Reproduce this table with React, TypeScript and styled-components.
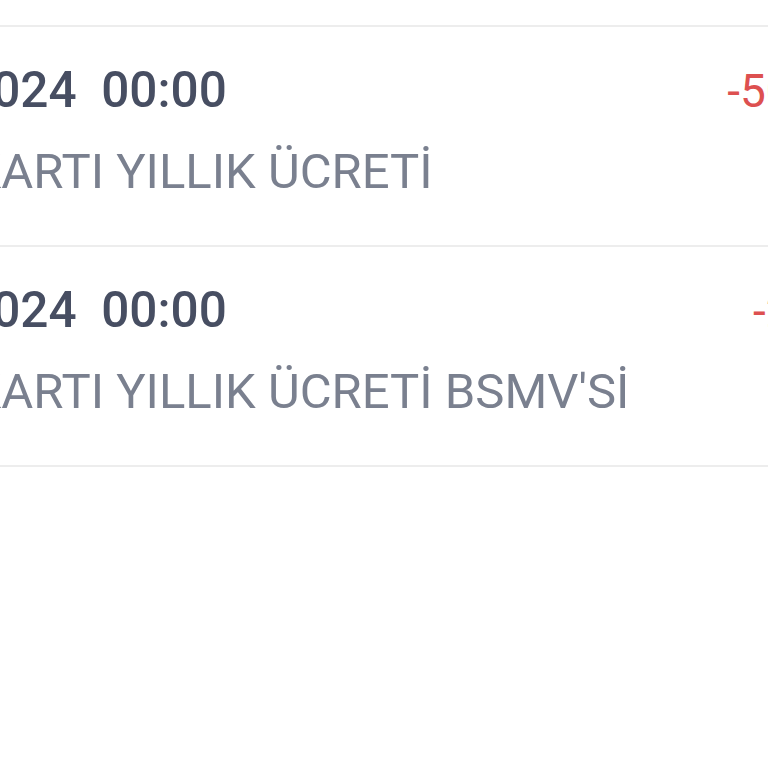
import styled, { createGlobalStyle } from "styled-components";

const GlobalStyle = createGlobalStyle`
    html, body {
        margin: 0;
        padding: 0;
        background: #ffffff;
        overflow: hidden;
    }
    body {
        font-family: Roboto, "Noto Sans", "Liberation Sans", sans-serif;
    }
`;

interface Transaction {
    date: string;
    time: string;
    description: string;
    amount: string;
}

const transactions: Transaction[] = [
    { date: "15.03.2024", time: "00:00", description: "KREDİ KARTI YILLIK ÜCRETİ", amount: "-500,00 TL" },
    { date: "15.03.2024", time: "00:00", description: "KREDİ KARTI YILLIK ÜCRETİ BSMV'Sİ", amount: "-25,00 TL" },
];

const Screen = styled.div`
    width: 768px;
    height: 768px;
    overflow: hidden;
    background: #ffffff;
`;

const List = styled.div`
    width: 1120px;
    margin-left: -176px;
    padding-top: 25px;
`;

const Row = styled.div`
    box-sizing: border-box;
    height: 220px;
    padding-top: 33px;
    border-top: 2px solid #ededed;
    display: flex;
    flex-direction: column;
    gap: 21px;

    &:last-child {
        height: 222px;
        border-bottom: 2px solid #ededed;
    }
`;

const TopLine = styled.div`
    display: flex;
    justify-content: space-between;
    align-items: baseline;
    padding-right: 3px;
`;

const DateText = styled.div`
    font-size: 49.5px;
    line-height: 60px;
    font-weight: 500;
    color: #474e62;
    white-space: pre;
`;

const Amount = styled.div`
    font-size: 46px;
    line-height: 60px;
    font-weight: 400;
    color: #dd5050;
    white-space: pre;
`;

const Description = styled.div`
    font-size: 49px;
    line-height: 60px;
    font-weight: 400;
    color: #7a808f;
    white-space: pre;
`;

export default function App() {
    return (
        <Screen>
            <GlobalStyle />
            <List>
                {transactions.map((t, i) => (
                    <Row key={i}>
                        <TopLine>
                            <DateText>{`${t.date}  ${t.time}`}</DateText>
                            <Amount>{t.amount}</Amount>
                        </TopLine>
                        <Description>{t.description}</Description>
                    </Row>
                ))}
            </List>
        </Screen>
    );
}
